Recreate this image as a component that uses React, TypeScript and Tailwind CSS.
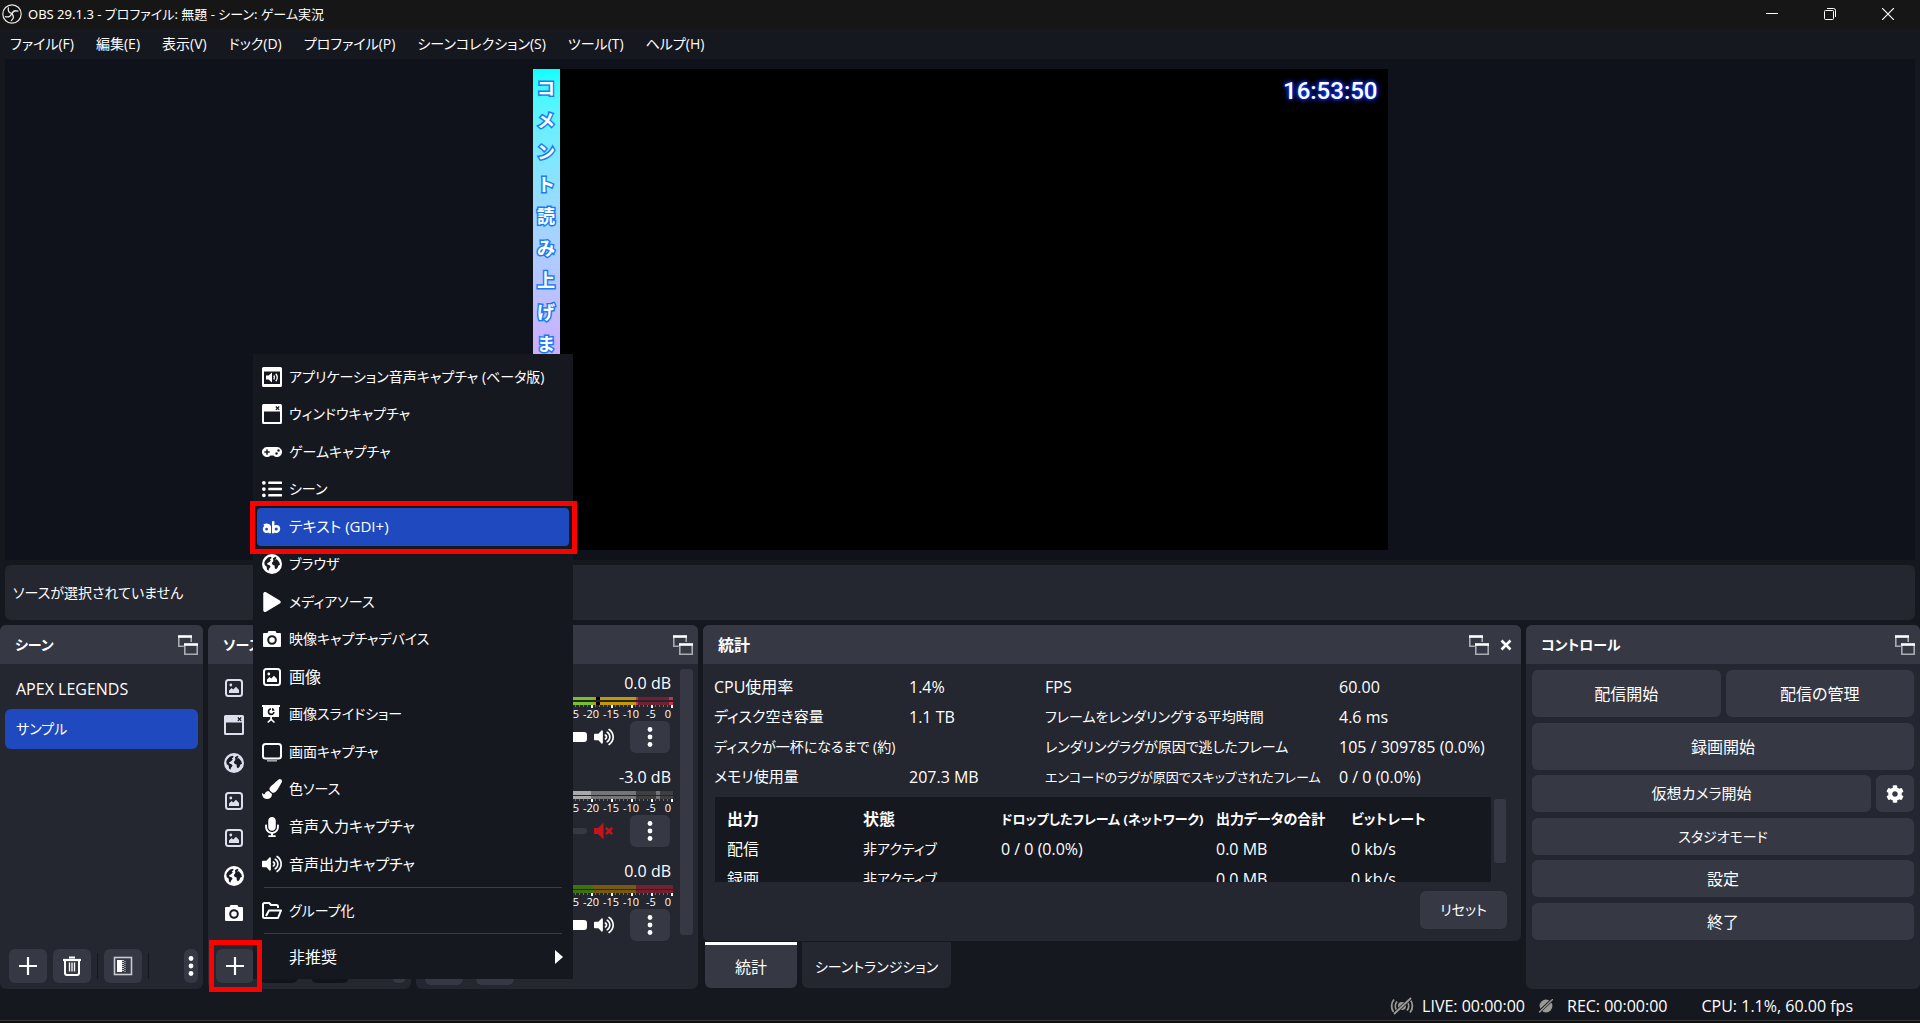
import React from 'react';
import clsx from 'clsx';
import {
  FaCog,
  FaGamepad,
  FaListUl,
  FaMicrophone,
  FaPaintBrush,
  FaPlay,
  FaVolumeUp,
} from 'react-icons/fa';

type IconProps = { className?: string };

const ObsLogo = () => (
  <svg viewBox="0 0 20 20" className="w-5 h-5" fill="none">
    <circle cx="10" cy="10" r="9.2" fill="#111" stroke="#e8e8e8" strokeWidth="1.2" />
    <g stroke="#e8e8e8" strokeWidth="1.3" strokeLinecap="round">
      <path d="M6.4 3.8c-.6 3 .8 5 3.4 5.6" />
      <path d="M15.9 7.2c-2.6-1-5 0-6 2.5" />
      <path d="M9.4 16.6c2.4-1.9 2.6-4.6.6-6.9" />
      <path d="M3.4 12.6c2.8.9 5-.1 6.4-2.9" />
    </g>
  </svg>
);

const PopoutIcon = () => (
  <svg viewBox="0 0 20 20" className="w-5 h-5" fill="none">
    <path d="M.8 2v9.2h5M13.2 2v5" stroke="#a9abb3" strokeWidth="1.6" />
    <path d="M0 1.5h14" stroke="#fff" strokeWidth="2.6" />
    <path d="M6.8 9v10.2h12.4V9" stroke="#a9abb3" strokeWidth="1.6" />
    <path d="M6 9.5h14" stroke="#fff" strokeWidth="2.6" />
  </svg>
);

const AppAudioIcon = ({ className }: IconProps) => (
  <svg viewBox="0 0 20 20" className={className}>
    <path
      fill="currentColor"
      fillRule="evenodd"
      d="M1.5 0h17A1.5 1.5 0 0 1 20 1.5v17a1.5 1.5 0 0 1-1.5 1.5h-17A1.5 1.5 0 0 1 0 18.5v-17A1.5 1.5 0 0 1 1.5 0zM2 4.5V17h16V4.5z"
    />
    <path fill="currentColor" d="M4 8.5h2.5L10 5.5v10l-3.5-3H4z" />
    <path
      d="M11.8 8.5c.9 1.3.9 2.7 0 4M13.8 6.8c1.8 2.2 1.8 5.2 0 7.4"
      stroke="currentColor"
      strokeWidth="1.4"
      fill="none"
    />
  </svg>
);

const WindowIcon = ({ className }: IconProps) => (
  <svg viewBox="0 0 20 20" className={className}>
    <path
      fill="currentColor"
      fillRule="evenodd"
      d="M1.5 0h17A1.5 1.5 0 0 1 20 1.5v17a1.5 1.5 0 0 1-1.5 1.5h-17A1.5 1.5 0 0 1 0 18.5v-17A1.5 1.5 0 0 1 1.5 0zM2 7.5V18h16V7.5z"
    />
    <path d="M13.8 2.5l3.4 3.4M17.2 2.5l-3.4 3.4" stroke="#161820" strokeWidth="1.2" />
  </svg>
);

const TextIcon = ({ className }: IconProps) => (
  <svg viewBox="0 0 20 20" className={className} fill="none" stroke="currentColor" strokeWidth="2.4">
    <circle cx="4.6" cy="12.2" r="2.6" />
    <path d="M2 8.6c2-1.3 5.8-1.2 5.8 1.6v6.1" />
    <circle cx="14.2" cy="12" r="2.8" />
    <path d="M11.2 4.2v12.1" />
  </svg>
);

const GlobeIcon = ({ className }: IconProps) => (
  <svg viewBox="0 0 20 20" className={className}>
    <circle cx="10" cy="10" r="10" fill="currentColor" />
    <g fill="#191b24">
      <path d="M3.2 6.5L6 3.6l3-.8.6 1.2-1.8 1.4 1 1.2-2 2-1.6.3.2 1.5 2.2.8 1 1.6-1.6 2-.6 2-1.4-1.4-.3-2.6-2-1.8-.4-2.6z" />
      <path d="M11 4.3l2.4-1.5 1.2 1-1.6 1.7 1.9-.2 2.4 2.9.7 2.6-1.6.6-1 2.6-1.4 1.2-1.2-1-.2-2.6-1.8-.5-1-2 1.6-2z" />
    </g>
  </svg>
);

const CameraIcon = ({ className }: IconProps) => (
  <svg viewBox="0 0 20 20" className={className}>
    <path
      fill="currentColor"
      d="M6.5 2h7l1 2H18a1 1 0 0 1 1 1v12a1 1 0 0 1-1 1H2a1 1 0 0 1-1-1V5a1 1 0 0 1 1-1h3.5z"
    />
    <circle cx="10" cy="11" r="3.8" fill="none" stroke="#191b24" strokeWidth="2" />
  </svg>
);

const ImageIcon = ({ className }: IconProps) => (
  <svg viewBox="0 0 20 20" className={className}>
    <rect x="2" y="2" width="16" height="16" rx="2.5" fill="none" stroke="currentColor" strokeWidth="2" />
    <circle cx="6.8" cy="7" r="1.4" fill="currentColor" />
    <path fill="currentColor" d="M5 15v-2.5L7.5 10l1.7 1.6L12 8.8l3 3.2v3z" />
  </svg>
);

const SlideshowIcon = ({ className }: IconProps) => (
  <svg viewBox="0 0 20 20" className={className}>
    <path fill="currentColor" d="M0 1h18v2h-1v10H1V3H0zM8.2 13H10v2l3 3-1 1-2.9-2.5L6.2 19l-1-1 3-3z" />
    <path fill="none" stroke="#161820" strokeWidth="1.6" d="M9 5a2.7 2.7 0 1 0 2.9 3" />
    <path fill="#161820" d="M10 4a3 3 0 0 1 2.6 2.8H10z" />
  </svg>
);

const DisplayIcon = ({ className }: IconProps) => (
  <svg viewBox="0 0 20 20" className={className} fill="none" stroke="currentColor">
    <rect x="1" y="2" width="18" height="14.5" rx="2.5" strokeWidth="2" />
    <path d="M5 18.8h10" strokeWidth="1.6" opacity=".6" />
  </svg>
);

const FolderIcon = ({ className }: IconProps) => (
  <svg viewBox="0 0 20 20" className={className} fill="none" stroke="currentColor" strokeWidth="2" strokeLinejoin="round">
    <path d="M16 7V5.5A1.5 1.5 0 0 0 14.5 4H9L7.2 2H2.5A1.5 1.5 0 0 0 1 3.5v12A1.5 1.5 0 0 0 2.5 17H16l3-7.500H7L4 15" />
  </svg>
);

const PlusIcon = () => (
  <svg viewBox="0 0 20 20" className="w-5 h-5">
    <path d="M10 1v18M1 10h18" stroke="#fff" strokeWidth="2.2" />
  </svg>
);

const TrashIcon = () => (
  <svg viewBox="0 0 20 20" className="w-5 h-5" fill="none" stroke="#fff">
    <path d="M7 1.5h6" strokeWidth="2" />
    <path d="M1 4h18" strokeWidth="2.2" />
    <path d="M3 5v12a2 2 0 0 0 2 2h10a2 2 0 0 0 2-2V5" strokeWidth="2" />
    <path d="M7.5 6.5v9M10 6.5v9M12.5 6.5v9" strokeWidth="1.3" />
  </svg>
);

const FilterIcon = () => (
  <svg viewBox="0 0 20 20" className="w-5 h-5">
    <rect x="1.5" y="1.5" width="17" height="17" fill="none" stroke="#c9cad0" strokeWidth="1.6" />
    <path fill="#fff" d="M4 4h5v12H4z" />
    <path stroke="#c9cad0" strokeWidth="2" strokeDasharray="1 1" d="M10 4v12" />
    <path stroke="#8b8d96" strokeWidth="2" strokeDasharray="1 1" d="M12 5v11" />
  </svg>
);

const MutedIcon = ({ className }: IconProps) => (
  <svg viewBox="0 0 20 20" className={className}>
    <path fill="currentColor" d="M0 7h4l5.5-5.5v17L4 13H0z" />
    <path d="M12 6.800l6.200 6.400M18.200 6.800L12 13.200" stroke="currentColor" strokeWidth="2.6" />
  </svg>
);

const DotsIcon = () => (
  <svg viewBox="0 0 6 20" className="w-[6px] h-5" fill="#fff">
    <circle cx="3" cy="2.5" r="2.4" />
    <circle cx="3" cy="10" r="2.4" />
    <circle cx="3" cy="17.5" r="2.4" />
  </svg>
);

const sourceMenu = [
  { icon: AppAudioIcon, label: 'アプリケーション音声キャプチャ (ベータ版)', size: 'text-sm' },
  { icon: WindowIcon, label: 'ウィンドウキャプチャ', size: 'text-sm' },
  { icon: FaGamepad, label: 'ゲームキャプチャ', size: 'text-sm' },
  { icon: FaListUl, label: 'シーン', size: 'text-sm' },
  { icon: TextIcon, label: 'テキスト (GDI+)', size: 'text-[15px]', selected: true },
  { icon: GlobeIcon, label: 'ブラウザ', size: 'text-sm' },
  { icon: FaPlay, label: 'メディアソース', size: 'text-sm' },
  { icon: CameraIcon, label: '映像キャプチャデバイス', size: 'text-sm' },
  { icon: ImageIcon, label: '画像', size: 'text-base' },
  { icon: SlideshowIcon, label: '画像スライドショー', size: 'text-sm' },
  { icon: DisplayIcon, label: '画面キャプチャ', size: 'text-sm' },
  { icon: FaPaintBrush, label: '色ソース', size: 'text-sm' },
  { icon: FaMicrophone, label: '音声入力キャプチャ', size: 'text-[15px]' },
  { icon: FaVolumeUp, label: '音声出力キャプチャ', size: 'text-[15px]' },
];

const sources = [
  { icon: ImageIcon, name: '画像', color: 'text-[#dcdfec]' },
  { icon: WindowIcon, name: 'ウィンドウキャプチャ', color: 'text-[#dcdfec]' },
  { icon: GlobeIcon, name: 'ブラウザ', color: 'text-[#dcdfec]' },
  { icon: ImageIcon, name: '画像 2', color: 'text-[#dcdfec]' },
  { icon: ImageIcon, name: '画像 3', color: 'text-[#dcdfec]' },
  { icon: GlobeIcon, name: 'ブラウザ 2', color: 'text-white' },
  { icon: CameraIcon, name: '映像キャプチャデバイス', color: 'text-white' },
];

// Meter segments are [start, end, color] on a 242px wide scale
type Segment = [number, number, string];

const channels: { name: string; db: string; muted?: boolean; value: number; meter: Segment[] }[] = [
  {
    name: 'デスクトップ音声',
    db: '0.0 dB',
    value: 100,
    meter: [
      [0, 162, '#78c22c'],
      [162, 205, '#c39a05'],
      [165, 169, '#000'],
      [205, 207, '#cf3048'],
      [207, 238, '#73202f'],
      [238, 242, '#cf3048'],
    ],
  },
  {
    name: 'マイク',
    db: '-3.0 dB',
    muted: true,
    value: 60,
    meter: [
      [0, 160, '#a8a8a8'],
      [160, 205, '#757575'],
      [205, 242, '#3f3f3f'],
      [225, 229, '#757575'],
    ],
  },
  {
    name: 'メディア',
    db: '0.0 dB',
    value: 100,
    meter: [
      [0, 162, '#3f710f'],
      [162, 205, '#775a10'],
      [205, 242, '#73202f'],
    ],
  },
];

const stats = [
  { label: 'CPU使用率', value: '1.4%', size: 'text-base' },
  { label: 'FPS', value: '60.00', size: 'text-base' },
  { label: 'ディスク空き容量', value: '1.1 TB', size: 'text-[15px]' },
  { label: 'フレームをレンダリングする平均時間', value: '4.6 ms', size: 'text-sm' },
  { label: 'ディスクが一杯になるまで (約)', value: '', size: 'text-sm' },
  { label: 'レンダリングラグが原因で逃したフレーム', value: '105 / 309785 (0.0%)', size: 'text-sm' },
  { label: 'メモリ使用量', value: '207.3 MB', size: 'text-[15px]' },
  { label: 'エンコードのラグが原因でスキップされたフレーム', value: '0 / 0 (0.0%)', size: 'text-[13px]' },
];

const menus = [
  'ファイル(F)',
  '編集(E)',
  '表示(V)',
  'ドック(D)',
  'プロファイル(P)',
  'シーンコレクション(S)',
  'ツール(T)',
  'ヘルプ(H)',
];

interface DockProps {
  title: string;
  className?: string;
  closable?: boolean;
  children: React.ReactNode;
}

const Dock: React.FC<DockProps> = ({ title, className, closable, children }) => (
  <section className={clsx('flex flex-col bg-[#242630] rounded-md', className)}>
    <header className="h-[39px] shrink-0 flex items-center bg-[#363944] rounded-t-md pl-[15px] pr-[5px]">
      <h2 className={clsx('flex-1 font-bold', closable ? 'text-base' : 'text-sm')}>{title}</h2>
      <button aria-label="フロート">
        <PopoutIcon />
      </button>
      {closable && (
        <button aria-label="閉じる" className="ml-[11px] mr-1">
          <svg viewBox="0 0 12 12" className="w-3 h-3">
            <path d="M1.5 1.5l9 9M10.5 1.5l-9 9" stroke="#fff" strokeWidth="2.6" />
          </svg>
        </button>
      )}
    </header>
    {children}
  </section>
);

interface ToolButtonProps {
  label: string;
  narrow?: boolean;
  disabled?: boolean;
  children?: React.ReactNode;
}

const ToolButton: React.FC<ToolButtonProps> = ({ label, narrow, disabled, children }) => (
  <button
    aria-label={label}
    disabled={disabled}
    className={clsx(
      'h-[34px] flex items-center justify-center rounded-md',
      narrow ? 'w-[14px]' : 'w-[38px]',
      disabled ? 'bg-[#12141b]' : 'bg-[#363944]',
    )}
  >
    {children}
  </button>
);

const Divider = () => <div className="w-px h-[26px] bg-[#161820]" />;

const Channel: React.FC<{ channel: (typeof channels)[number] }> = ({ channel }) => (
  <div className="h-[94px] pt-[3px]">
    <div className="flex justify-between h-[22px] pr-[2px] mb-[3px]">
      <span className="text-sm leading-[22px]">{channel.name}</span>
      <span className="text-base leading-[22px]">{channel.db}</span>
    </div>
    <svg viewBox="0 0 242 11" className="w-[242px] h-[11px] block" shapeRendering="crispEdges">
      {channel.meter.map(([from, to, color]) => (
        <rect key={from} x={from} y="0" width={to - from} height="8" fill={color} />
      ))}
      <rect x="0" y={channel.value === 100 && channel.meter.length > 3 ? 3 : 4} width="242" height={channel.meter.length > 4 ? 2 : 1} fill="#232530" />
      {Array.from({ length: 61 }, (_, i) => (
        <rect
          key={i}
          x={i * 4}
          y="8"
          width={i % 5 === 0 ? 2 : 1}
          height={i % 5 === 0 ? 3 : 2}
          fill={i % 5 === 0 ? '#fff' : '#6b6d75'}
        />
      ))}
    </svg>
    <div className="flex justify-end h-3 leading-3 text-[11px] pr-[2px]">
      {['-25', '-20', '-15', '-10', '-5'].map((n) => (
        <span key={n} className="w-5 text-center">
          {n}
        </span>
      ))}
      <span className="w-[10px] text-right">0</span>
    </div>
    <div className="flex items-center mt-px pr-[3px]">
      <input
        type="range"
        aria-label={channel.name}
        defaultValue={channel.value}
        className={clsx(
          'w-[156px] h-[6px] appearance-none rounded-full [&::-webkit-slider-thumb]:appearance-none [&::-webkit-slider-thumb]:w-5 [&::-webkit-slider-thumb]:h-[10px] [&::-webkit-slider-thumb]:rounded-[3px] [&::-webkit-slider-thumb]:bg-white',
          channel.muted ? 'bg-[#363944]' : 'bg-[#1f49be]',
        )}
      />
      <button aria-label="ミュート" className="ml-[7px] mr-4">
        {channel.muted ? <MutedIcon className="w-5 h-5 text-[#c4151f]" /> : <FaVolumeUp className="w-5 h-5" />}
      </button>
      <button aria-label="オプション" className="w-10 h-8 flex items-center justify-center rounded-md bg-[#363944]">
        <DotsIcon />
      </button>
    </div>
  </div>
);

const SourceMenu = () => (
  <div role="menu" className="absolute left-[253px] bottom-[44px] w-80 p-1 bg-[#161820] text-sm">
    <div className="h-[525px] flex flex-col">
      {sourceMenu.map((item) => {
        const Icon = item.icon;
        return (
          <button
            key={item.label}
            role="menuitem"
            className={clsx(
              'relative flex-1 flex items-center gap-[7px] pl-[5px] rounded-[4px] text-left whitespace-nowrap',
              item.size,
              item.selected && 'bg-[#1f49be]',
            )}
          >
            <Icon className="w-5 h-5 shrink-0" />
            {item.label}
            {item.selected && (
              <span className="absolute -left-[7px] -right-2 -top-[7px] -bottom-2 border-[5px] border-[#fe0000]" />
            )}
          </button>
        );
      })}
    </div>
    <hr className="my-1 mx-[7px] border-[#3a3d49]" />
    <button role="menuitem" className="w-full h-[37px] flex items-center gap-[7px] pl-[5px]">
      <FolderIcon className="w-5 h-5" />
      グループ化
    </button>
    <hr className="my-1 mx-[7px] border-[#3a3d49]" />
    <button role="menuitem" className="w-full h-[37px] flex items-center justify-between pl-8 pr-[6px] text-base">
      非推奨
      <svg viewBox="0 0 8 14" className="w-2 h-[14px]">
        <path d="M0 0l8 7-8 7z" fill="#fff" />
      </svg>
    </button>
  </div>
);

interface ControlButtonProps {
  tall?: boolean;
  size?: string;
  children: React.ReactNode;
}

const ControlButton: React.FC<ControlButtonProps> = ({ tall, size = 'text-base', children }) => (
  <button className={clsx('flex-1 rounded-md bg-[#363944]', size, tall ? 'h-[47px]' : 'h-[37px]')}>{children}</button>
);

const App: React.FC = () => (
  <div className="relative min-h-screen flex flex-col bg-[#161820] text-white text-sm [font-family:'Open_Sans','Noto_Sans_CJK_JP',sans-serif] [font-feature-settings:'palt']">
    <div className="h-[29px] flex items-center bg-[#161616] pl-[2px] pb-px text-[13px]">
      <ObsLogo />
      <h1 className="flex-1 ml-[6px] [font-family:'Noto_Sans','Noto_Sans_CJK_JP',sans-serif]">
        OBS 29.1.3 - プロファイル: 無題 - シーン: ゲーム実況
      </h1>
      <div className="flex gap-[46px] pr-[26px]">
        <button aria-label="最小化">
          <svg viewBox="0 0 12 12" className="w-3 h-3">
            <path d="M0 5.5h12" stroke="#fff" />
          </svg>
        </button>
        <button aria-label="元に戻す">
          <svg viewBox="0 0 12 12" className="w-3 h-3" fill="none" stroke="#fff">
            <rect x=".5" y="2.5" width="9" height="9" rx="1" />
            <path d="M3 .5h6.5a2 2 0 0 1 2 2V9" />
          </svg>
        </button>
        <button aria-label="閉じる">
          <svg viewBox="0 0 12 12" className="w-3 h-3">
            <path d="M0 0l12 12M12 0L0 12" stroke="#fff" strokeWidth="1.2" />
          </svg>
        </button>
      </div>
    </div>

    <nav className="h-[30px] flex items-center gap-[22px] pl-[10px] pb-px">
      {menus.map((m) => (
        <button key={m}>{m}</button>
      ))}
    </nav>

    {/* Preview */}
    <main className="flex-1 flex justify-center items-center mx-[5px] py-[10px] bg-[#10121b]">
      <div className="w-[855px] max-w-full aspect-video flex justify-between items-start bg-black">
        <div className="self-stretch w-[27px] pt-[3px] flex flex-col items-center bg-linear-to-b from-[#00ffff] from-0% to-[#ccaeff] to-60%">
          {[...'コメント読み上げま'].map((c, i) => (
            <span
              key={i}
              className="h-8 leading-8 text-lg font-bold [font-feature-settings:normal] [-webkit-text-stroke:3px_#1a7cf5] [paint-order:stroke_fill]"
            >
              {c}
            </span>
          ))}
        </div>
        <time className="mt-2 mr-[10px] text-2xl leading-7 font-medium [font-family:Roboto,sans-serif] [text-shadow:0_0_3px_#1746ff,0_0_5px_#0a2ee8,0_0_6px_#0a2ee8]">
          16:53:50
        </time>
      </div>
    </main>

    <div className="h-[55px] flex items-center mx-[5px] my-[5px] pl-2 rounded-md bg-[#242630]">
      ソースが選択されていません
    </div>

    <div className="h-[364px] flex gap-[5px]">
      <Dock title="シーン" className="w-[203px]">
        <div className="flex-1 p-[5px]">
          <button className="w-full h-10 pl-[11px] text-left text-base">APEX LEGENDS</button>
          <button className="w-full h-10 pl-[11px] text-left rounded-md bg-[#1f49be]">サンプル</button>
        </div>
        <div className="flex items-center gap-[6px] pl-[9px] pr-[5px] pb-[6px]">
          <ToolButton label="追加">
            <PlusIcon />
          </ToolButton>
          <ToolButton label="削除">
            <TrashIcon />
          </ToolButton>
          <Divider />
          <ToolButton label="フィルタ">
            <FilterIcon />
          </ToolButton>
          <Divider />
          <div className="flex-1" />
          <ToolButton label="その他" narrow>
            <DotsIcon />
          </ToolButton>
        </div>
      </Dock>

      <Dock title="ソース" className="w-[203px]">
        <ul className="flex-1 flex flex-col pt-[5px] pb-[17px] pl-4">
          {sources.map((s) => (
            <li key={s.name} className="flex-1 flex items-center">
              <s.icon className={clsx('w-5 h-5', s.color)} />
            </li>
          ))}
        </ul>
        <div className="flex items-center gap-[6px] pl-2 pr-[5px] pb-[6px]">
          <div className="relative">
            <ToolButton label="追加">
              <PlusIcon />
            </ToolButton>
            <span className="absolute z-10 -left-[7px] -right-2 -inset-y-[9px] border-[5px] border-[#fe0000]" />
          </div>
          <ToolButton label="削除" disabled />
          <Divider />
          <ToolButton label="プロパティ" disabled />
          <div className="flex-1" />
          <ToolButton label="その他" narrow />
        </div>
      </Dock>

      <Dock title="音声ミキサー" className="w-[282px]">
        <div className="flex-1 flex pl-[15px] pt-[5px]">
          <div className="w-[242px]">
            {channels.map((c) => (
              <Channel key={c.name} channel={c} />
            ))}
          </div>
          <div className="w-[13px] h-[266px] ml-[7px] rounded-[3px] bg-[#363944]" />
        </div>
        <div className="flex gap-[13px] pl-[9px] pb-[6px]">
          <ToolButton label="詳細" />
          <ToolButton label="メニュー" />
        </div>
      </Dock>

      <div className="flex-1 min-w-0 flex flex-col">
        <Dock title="統計" closable className="h-[316px]">
          <dl className="grid grid-cols-[195px_136px_294px_1fr] auto-rows-[30px] items-center pl-[11px] pt-2 whitespace-nowrap">
            {stats.map((s) => (
              <React.Fragment key={s.label}>
                <dt className={s.size}>{s.label}</dt>
                <dd className="text-base">{s.value}</dd>
              </React.Fragment>
            ))}
          </dl>
          <div className="flex pl-3 pr-[15px] mt-[5px]">
            <div className="flex-1 h-[85px] overflow-hidden pt-[7px] bg-[#161820]">
              <table className="w-full table-fixed text-left whitespace-nowrap">
                <thead>
                  <tr className="h-[30px]">
                    <th className="w-[148px] pl-3 text-base">出力</th>
                    <th className="w-[138px] text-base">状態</th>
                    <th className="w-[215px] text-[13px]">ドロップしたフレーム (ネットワーク)</th>
                    <th className="w-[135px]">出力データの合計</th>
                    <th>ビットレート</th>
                  </tr>
                </thead>
                <tbody>
                  <tr className="h-[30px]">
                    <td className="pl-3 text-base">配信</td>
                    <td>非アクティブ</td>
                    <td className="text-base">0 / 0 (0.0%)</td>
                    <td className="text-base">0.0 MB</td>
                    <td className="text-base">0 kb/s</td>
                  </tr>
                  <tr className="h-[30px]">
                    <td className="pl-3 text-base">録画</td>
                    <td>非アクティブ</td>
                    <td />
                    <td className="text-base">0.0 MB</td>
                    <td className="text-base">0 kb/s</td>
                  </tr>
                </tbody>
              </table>
            </div>
            <div className="w-3 h-16 ml-[3px] mt-[2px] rounded-[3px] bg-[#363944]" />
          </div>
          <button className="self-end w-[87px] h-[38px] mr-[14px] mt-[9px] rounded-md bg-[#363944]">リセット</button>
        </Dock>
        <div role="tablist" className="flex gap-[5px] pl-[2px] pt-px">
          <button role="tab" className="w-[92px] h-[46px] rounded-b-md border-t-[3px] border-white bg-[#363944] text-base">
            統計
          </button>
          <button role="tab" className="w-[149px] h-[46px] rounded-b-md border-t-[3px] border-[#242630] bg-[#242630]">
            シーントランジション
          </button>
        </div>
      </div>

      <Dock title="コントロール" className="w-[394px]">
        <div className="flex flex-col gap-[5px] p-[6px] pb-0">
          <div className="flex gap-[5px]">
            <ControlButton tall>配信開始</ControlButton>
            <ControlButton tall>配信の管理</ControlButton>
          </div>
          <div className="flex pt-px">
            <ControlButton tall>録画開始</ControlButton>
          </div>
          <div className="flex gap-[5px]">
            <ControlButton size="text-[15px]">仮想カメラ開始</ControlButton>
            <button
              aria-label="仮想カメラ設定"
              className="w-[38px] flex items-center justify-center rounded-md bg-[#363944]"
            >
              <FaCog className="w-[18px] h-[18px]" />
            </button>
          </div>
          <div className="flex pt-px">
            <ControlButton size="text-sm">スタジオモード</ControlButton>
          </div>
          <div className="flex">
            <ControlButton>設定</ControlButton>
          </div>
          <div className="flex pt-px">
            <ControlButton>終了</ControlButton>
          </div>
        </div>
      </Dock>
    </div>

    <footer className="h-[31px] flex items-center justify-end pt-[2px] pr-[67px] text-base">
      <svg viewBox="0 0 24 18" className="w-6 h-[18px] mr-2" fill="none" stroke="#9c9a96" strokeWidth="1.8">
        <path d="M4 2.5a10 10 0 0 0 0 13M7 4.5a7 7 0 0 0 0 9M20 2.5a10 10 0 0 1 0 13M17 4.5a7 7 0 0 1 0 9" />
        <circle cx="12" cy="9" r="4" fill="#9c9a96" stroke="none" />
        <path d="M3 18L21 1" stroke="#161820" strokeWidth="3.4" />
        <path d="M4 17L21 1" />
      </svg>
      <span>LIVE: 00:00:00</span>
      <svg viewBox="0 0 14 14" className="w-[14px] h-[14px] mx-[14px]">
        <circle cx="7" cy="7" r="6.4" fill="#9c9a96" />
        <path d="M-1 14L14 0" stroke="#161820" strokeWidth="3" />
        <path d="M0 13.5L14 0" stroke="#9c9a96" strokeWidth="1.4" />
      </svg>
      <span>REC: 00:00:00</span>
      <span className="ml-[34px]">CPU: 1.1%, 60.00 fps</span>
    </footer>
    <div className="h-[3px] border-t border-[#3a3a3a] bg-[#0e0e0e]" />

    <SourceMenu />
  </div>
);

export default App;
